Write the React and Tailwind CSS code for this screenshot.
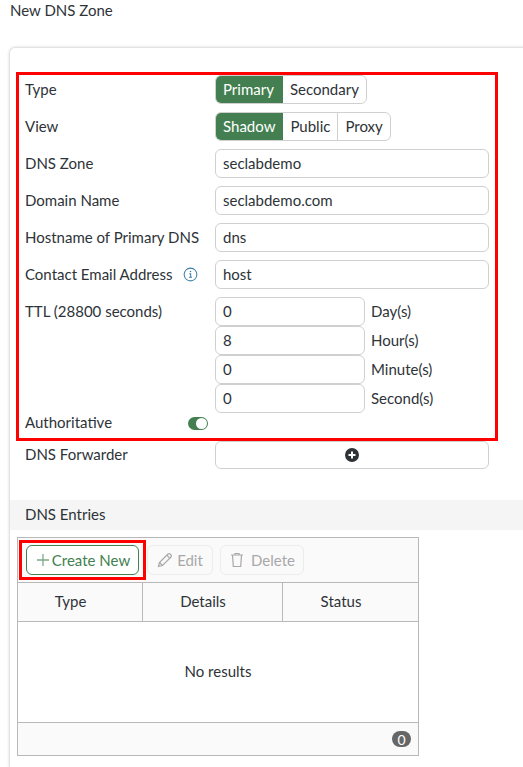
const Row = ({ label, children, icon }) => (
  <div className="flex h-[29px] items-center">
    <div className="flex w-[190px] items-center gap-[11px]">
      <span>{label}</span>
      {icon}
    </div>
    {children}
  </div>
);

const TextBox = ({ value, className = "w-[274px]" }) => (
  <input
    readOnly
    value={value}
    className={`h-[29px] rounded-[6px] border border-[#d0d0d0] bg-white pb-[2px] pl-[7px] pr-[8px] text-[#2e3338] outline-none ${className}`}
  />
);

const Toggle = ({ items, activeClass = "px-[8px]" }) => (
  <div className="flex h-[29px] overflow-hidden rounded-[6px] border border-[#d0d0d0]">
    {items.map((item, i) => (
      <div
        key={item}
        className={
          i === 0
            ? `-my-px -ml-px flex items-center bg-[#437f50] text-white ${activeClass}`
            : `flex items-center px-[7px] ${i > 1 ? "border-l border-[#d0d0d0]" : ""}`
        }
      >
        {item}
      </div>
    ))}
  </div>
);

const InfoIcon = () => (
  <svg viewBox="0 0 16 16" className="h-[15px] w-[15px] text-[#3b7ea8]" fill="none" stroke="currentColor">
    <circle cx="8" cy="8" r="6.8" strokeWidth="1.1" />
    <path d="M6.6 7.2h1.6v3.6M6.4 11h3.2" strokeWidth="1.1" />
    <circle cx="8" cy="4.9" r="0.8" fill="currentColor" stroke="none" />
  </svg>
);

const PencilIcon = () => (
  <svg viewBox="0 0 16 16" className="h-[16px] w-[16px]" fill="none" stroke="#a8a8a8" strokeWidth="1.2">
    <path d="M1.5 14.5l1-4L11 2a1.4 1.4 0 012 0l1 1a1.4 1.4 0 010 2l-8.500 8.500z" />
    <path d="M2.500 10.500l3 3M9.800 3.200l3 3" />
  </svg>
);

const TrashIcon = () => (
  <svg viewBox="0 0 16 16" className="h-[16px] w-[16px]" fill="none" stroke="#a8a8a8" strokeWidth="1.2">
    <path d="M2 3h12M6 3V1.500h4V3M3.500 3l.8 11.500h7.400L12.500 3" />
  </svg>
);

export default function App() {
  return (
    <div className="h-[767px] w-[523px] overflow-hidden bg-white font-['Lato','Noto_Sans',sans-serif] text-[15px] text-[#2e3338]">
      <div className="h-[47px] px-[10px] leading-[20px]">New DNS Zone</div>

      <div className="ml-[9px] h-[720px] w-[600px] rounded-tl-[6px] border-t border-l border-[#e2e2e2] pt-[24px] shadow-[0_0_3px_rgba(0,0,0,0.15)]">
        {/* Settings */}
        <div className="ml-[6px] w-[482px] border-[3px] border-[#ff0000] pb-[5px] pl-[6px]">
          <div className="flex flex-col gap-[8px]">
            <Row label="Type">
              <Toggle items={["Primary", "Secondary"]} activeClass="pl-[8px] pr-[9px]" />
            </Row>
            <Row label="View">
              <Toggle items={["Shadow", "Public", "Proxy"]} />
            </Row>
            <Row label="DNS Zone">
              <TextBox value="seclabdemo" />
            </Row>
            <Row label="Domain Name">
              <TextBox value="seclabdemo.com" />
            </Row>
            <Row label="Hostname of Primary DNS">
              <TextBox value="dns" />
            </Row>
            <Row label="Contact Email Address" icon={<InfoIcon />}>
              <TextBox value="host" />
            </Row>
            <div className="flex">
              <div className="w-[190px] pt-[4px] leading-[20px]">TTL (28800 seconds)</div>
              <div className="flex flex-col">
                {[
                  ["0", "Day(s)"],
                  ["8", "Hour(s)"],
                  ["0", "Minute(s)"],
                  ["0", "Second(s)"],
                ].map(([value, unit]) => (
                  <div key={unit} className="flex items-center gap-[6px]">
                    <TextBox value={value} className="w-[150px]" />
                    <span>{unit}</span>
                  </div>
                ))}
              </div>
            </div>
          </div>
          <div className="flex h-[20px] items-center">
            <span className="w-[163px] pb-[2px]">Authoritative</span>
            <span className="flex h-[13px] w-[20px] items-center justify-end rounded-full bg-[#437f50] pr-[1px]">
              <span className="h-[11px] w-[11px] rounded-full bg-white" />
            </span>
          </div>
        </div>

        <div className="ml-[15px] flex h-[28px] items-center">
          <span className="w-[190px] pb-[2px]">DNS Forwarder</span>
          <div className="flex h-[28px] w-[274px] items-center justify-center rounded-[6px] border border-[#d0d0d0]">
            <svg viewBox="0 0 14 14" className="h-[14px] w-[14px]">
              <circle cx="7" cy="7" r="7" fill="#2e3338" />
              <path d="M7 3.500v7M3.500 7h7" stroke="#fff" strokeWidth="2" />
            </svg>
          </div>
        </div>

        {/* Entries */}
        <div className="mt-[31px] flex h-[30px] items-center bg-[#f5f5f5] pb-[1px] pl-[15px]">DNS Entries</div>

        <div className="ml-[7px] mt-[7px] w-[402px] border border-[#b8b8b8]">
          <div className="flex h-[45px] items-center border-b border-[#b8b8b8] bg-[#fafafa] pl-[1px]">
            <div className="border-[3px] border-[#ff0000] px-[4px] py-[2px]">
              <div className="flex h-[30px] w-[113px] items-center justify-center gap-[2px] rounded-[6px] border border-[#437f50] bg-white pl-[1px] text-[#437f50]">
                <svg viewBox="0 0 14 14" className="h-[14px] w-[14px]" stroke="#7fa888" fill="none" strokeWidth="1.3">
                  <path d="M7 1v12M1 7h12" />
                </svg>
                Create New
              </div>
            </div>
            <div className="ml-[1px] flex h-[30px] w-[66px] items-center justify-center gap-[4px] rounded-[6px] border border-[#ececec] text-[#a8a8a8]">
              <PencilIcon />
              Edit
            </div>
            <div className="ml-[7px] flex h-[30px] w-[84px] items-center justify-center gap-[6px] rounded-[6px] border border-[#ececec] text-[#a8a8a8]">
              <TrashIcon />
              Delete
            </div>
          </div>

          <div className="grid h-[39px] grid-cols-[125px_140px_1fr] border-b border-[#b8b8b8] bg-[#fafafa] pb-0 text-center">
            <div className="flex items-center justify-center border-r border-[#b8b8b8] pb-[2px] pr-[19px]">Type</div>
            <div className="flex items-center justify-center border-r border-[#b8b8b8] pb-[2px] pr-[19px]">Details</div>
            <div className="flex items-center justify-center pb-[2px] pr-[19px]">Status</div>
          </div>

          <div className="flex h-[100px] items-center justify-center pb-[2px]">No results</div>

          <div className="flex h-[33px] items-center justify-end border-t border-[#b8b8b8] bg-[#fafafa] pr-[7px]">
            <span className="flex h-[16px] w-[19px] items-center justify-center rounded-full bg-[#666666] text-[14px] text-white">0</span>
          </div>
        </div>
      </div>
    </div>
  );
}
